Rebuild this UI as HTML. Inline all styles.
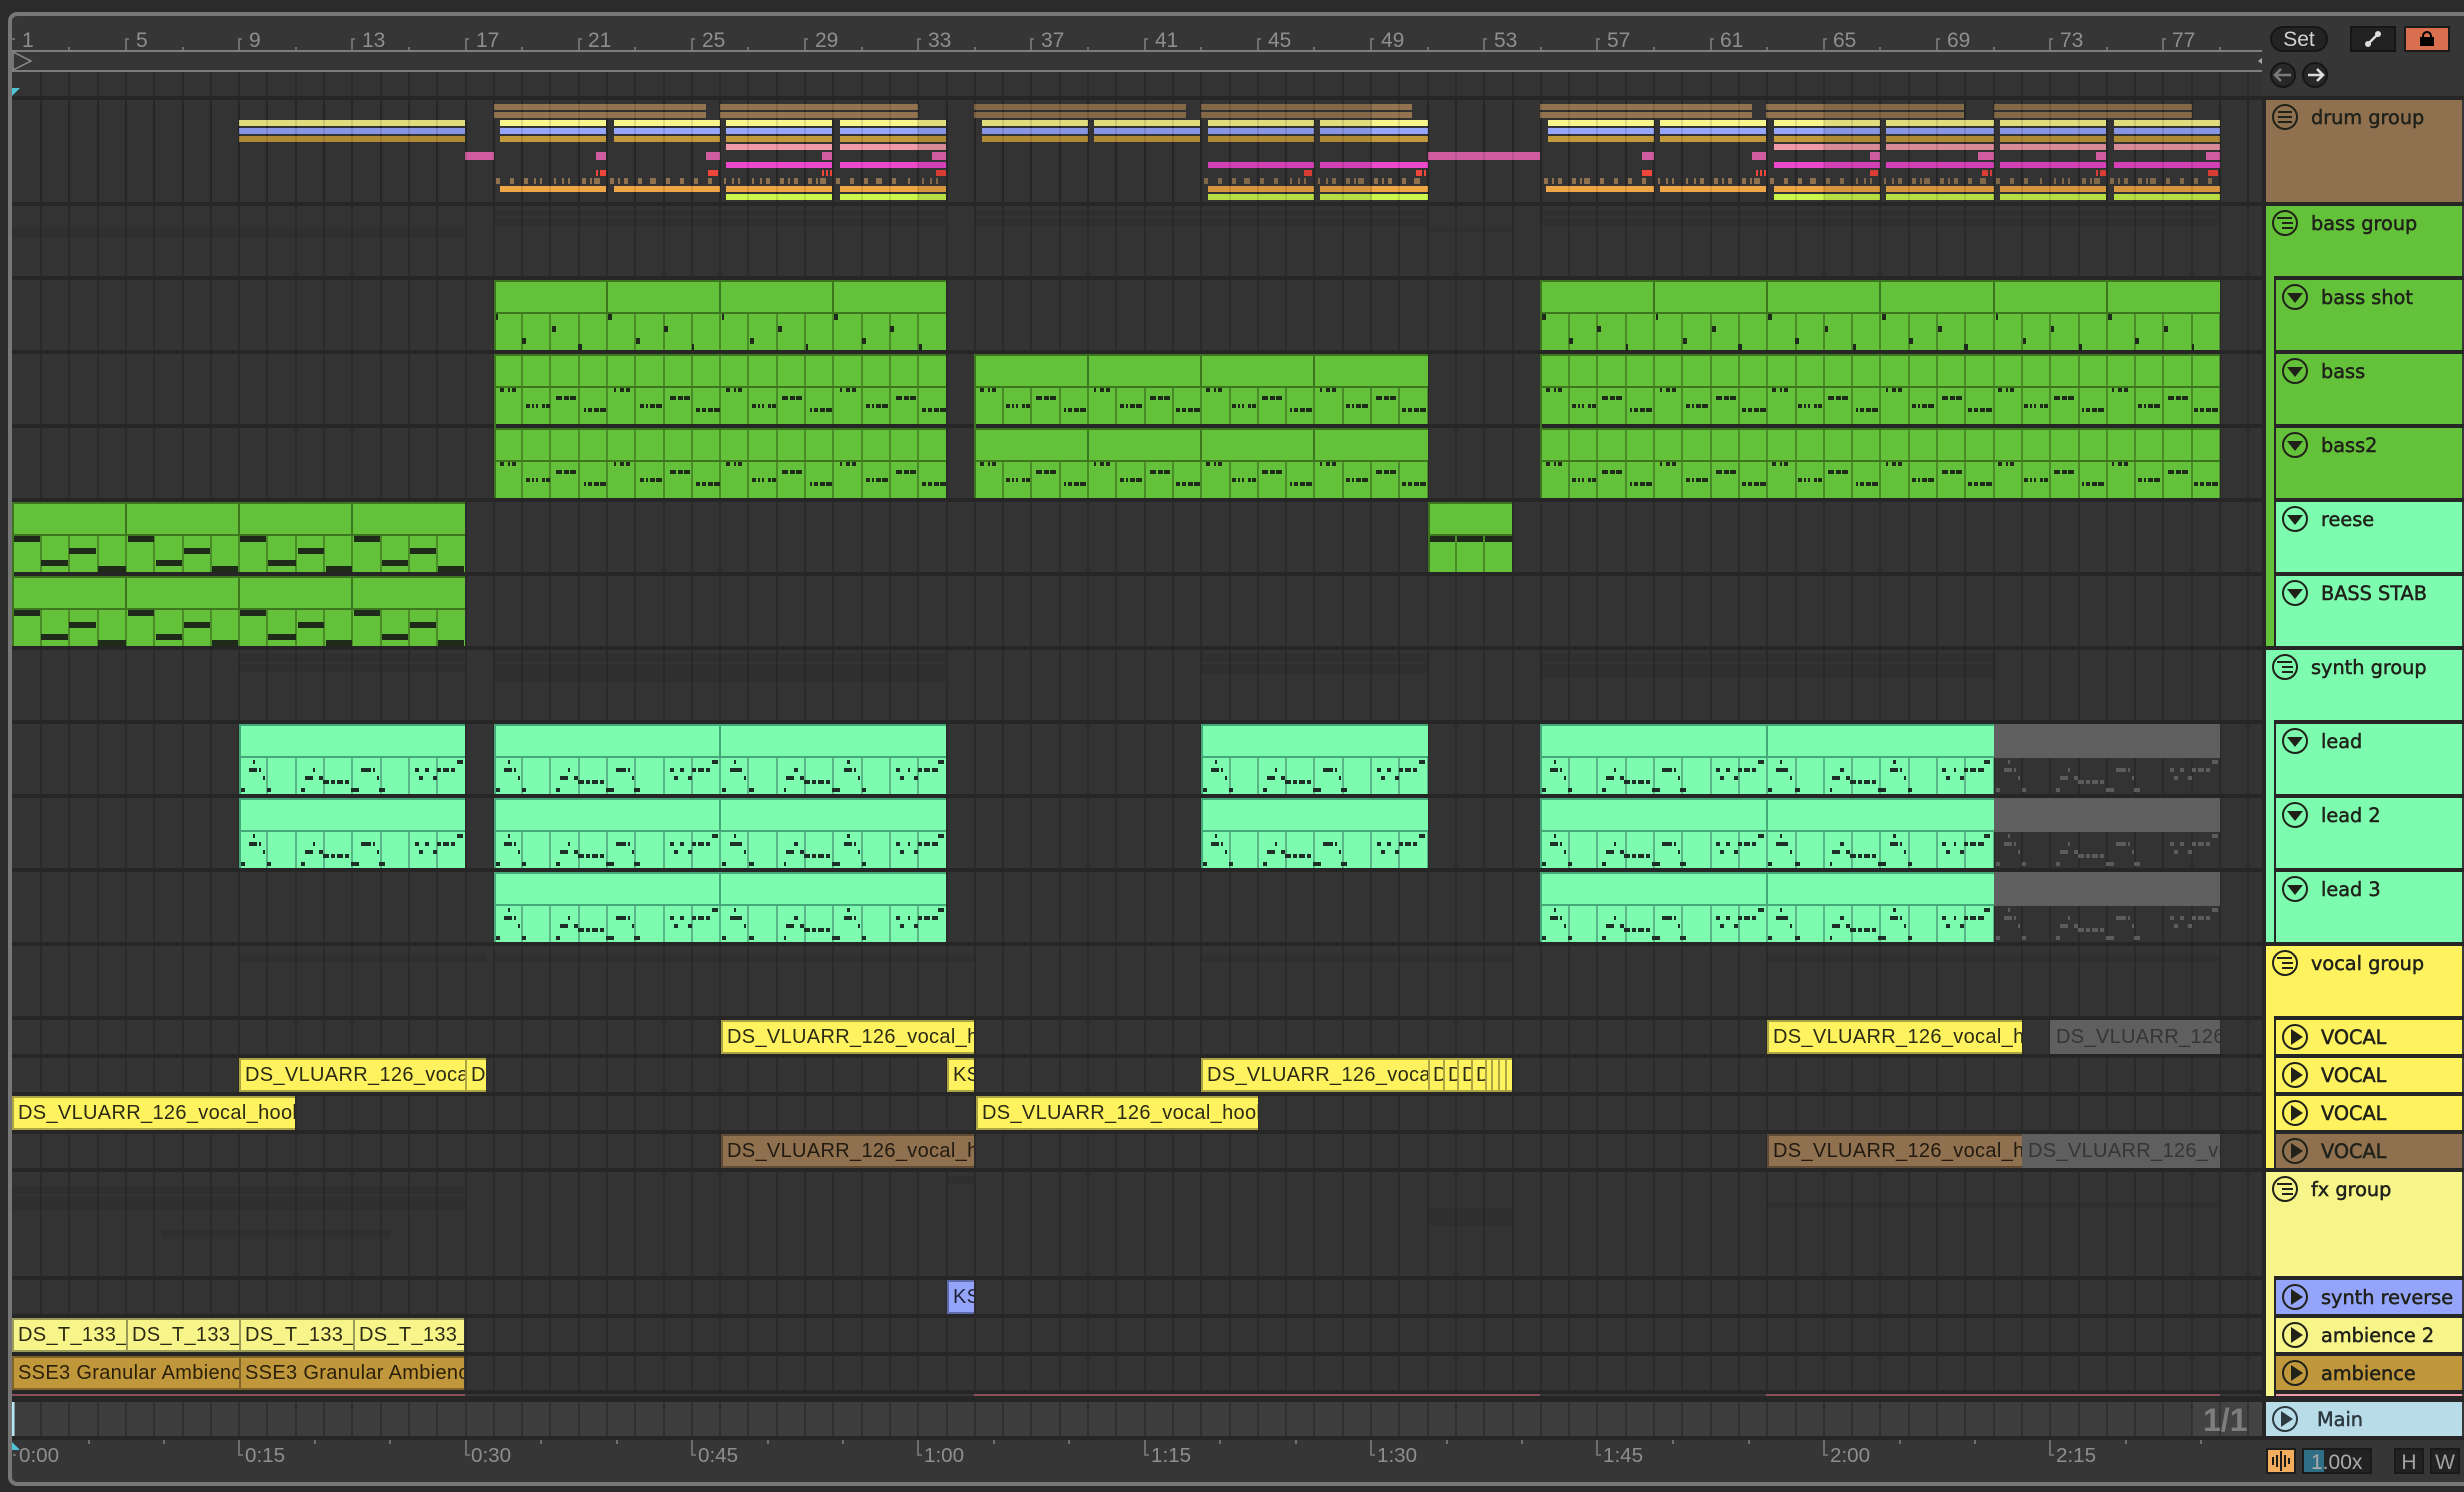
<!DOCTYPE html>
<html><head><meta charset="utf-8"><title>Arrangement</title>
<style>
html,body{margin:0;padding:0;background:#2b2b2b;width:2464px;height:1492px;overflow:hidden}
#f{position:absolute;left:8px;top:12px;width:2480px;height:1474px;box-sizing:border-box;border:4px solid #777;border-radius:9px;background:#363636}
svg{position:absolute;left:0;top:0}
svg text{font-family:"Liberation Sans",sans-serif}
.rl{font-size:21px;fill:#8e8e8e}
.h text{font-family:"DejaVu Sans",sans-serif;font-size:19.3px;stroke:currentColor;stroke-width:.5px;fill:currentColor}
.h{color:#20221a}
.c{position:absolute;box-sizing:border-box;height:34px;border:2px solid;border-right:0;font:20px/31px "Liberation Sans",sans-serif;letter-spacing:.33px;padding-left:4px;overflow:hidden;white-space:pre;color:#2b2a14}
.y{background:#fef35f;border-color:#aca343}
.b{background:#8f7150;border-color:#5f4b36;color:#221a10}
.g{background:#5f5f5f;border-color:#5f5f5f;color:#353535}
.l{background:#f7f48a;border-color:#9c9a58}
.o{background:#c0973a;border-color:#7f6427;color:#2a200a}
.p{background:#94a4fa;border-color:#5f6aa8;color:#20243a}
</style></head><body>
<div id="f"></div>
<svg width="2464" height="1492" viewBox="0 0 2464 1492" fill="none">
<defs>
<path id="v" d="M41 0v1500M69 0v1500M98 0v1500M126 0v1500M154 0v1500M183 0v1500M211 0v1500M239 0v1500M267 0v1500M296 0v1500M324 0v1500M352 0v1500M381 0v1500M409 0v1500M437 0v1500M466 0v1500M494 0v1500M522 0v1500M550 0v1500M579 0v1500M607 0v1500M635 0v1500M664 0v1500M692 0v1500M720 0v1500M748 0v1500M777 0v1500M805 0v1500M833 0v1500M862 0v1500M890 0v1500M918 0v1500M947 0v1500M975 0v1500M1003 0v1500M1031 0v1500M1060 0v1500M1088 0v1500M1116 0v1500M1145 0v1500M1173 0v1500M1201 0v1500M1230 0v1500M1258 0v1500M1286 0v1500M1314 0v1500M1343 0v1500M1371 0v1500M1399 0v1500M1428 0v1500M1456 0v1500M1484 0v1500M1513 0v1500M1541 0v1500M1569 0v1500M1597 0v1500M1626 0v1500M1654 0v1500M1682 0v1500M1711 0v1500M1739 0v1500M1767 0v1500M1796 0v1500M1824 0v1500M1852 0v1500M1880 0v1500M1909 0v1500M1937 0v1500M1965 0v1500M1994 0v1500M2022 0v1500M2050 0v1500M2079 0v1500M2107 0v1500M2135 0v1500M2163 0v1500M2192 0v1500M2220 0v1500M2248 0v1500"/>
<clipPath id="gr"><rect x="12" y="72" width="2250" height="1322"/></clipPath>
<clipPath id="mn"><rect x="12" y="1402" width="2250" height="34"/></clipPath>
<clipPath id="dl"><rect x="12" y="102" width="2250" height="100"/></clipPath>
<clipPath id="dim"><rect x="239" y="118" width="226" height="84"/><rect x="918" y="100" width="454" height="102"/><rect x="1824" y="100" width="396" height="102"/></clipPath>
<clipPath id="gc">
<rect x="494" y="314" width="452" height="36"/><rect x="1540" y="314" width="680" height="36"/>
<rect x="494" y="356" width="452" height="68"/><rect x="974" y="388" width="454" height="36"/><rect x="1540" y="356" width="680" height="68"/>
<rect x="494" y="430" width="452" height="68"/><rect x="974" y="462" width="454" height="36"/><rect x="1540" y="430" width="680" height="68"/>
<rect x="12" y="536" width="453" height="36"/><rect x="1428" y="536" width="84" height="36"/><rect x="12" y="610" width="453" height="36"/>
</clipPath>
<clipPath id="mc">
<rect x="239" y="758" width="226" height="36"/><rect x="494" y="758" width="452" height="36"/><rect x="1201" y="758" width="227" height="36"/><rect x="1540" y="758" width="454" height="36"/>
<rect x="239" y="832" width="226" height="36"/><rect x="494" y="832" width="452" height="36"/><rect x="1201" y="832" width="227" height="36"/><rect x="1540" y="832" width="454" height="36"/>
<rect x="494" y="906" width="452" height="36"/><rect x="1540" y="906" width="454" height="36"/>
</clipPath>
<path id="a" d="M239 0H465M500 0H606M614 0H720M726 0H832M840 0H946M982 0H1088M1094 0H1200M1208 0H1314M1320 0H1428M1548 0H1654M1660 0H1766M1774 0H1880M1886 0H1994M2000 0H2106M2114 0H2220"/>
<path id="c" d="M726 0H832M840 0H946M1774 0H1880M1886 0H1994M2000 0H2106M2114 0H2220"/>
<path id="d" d="M1208 0H1314M1320 0H1428"/>
<path id="bn" d="M500 390h4M508 390h2M512 390h4M526 406h4M532 406h2M536 406h2M542 406h3M546 406h4M556 398h6M564 398h5M570 398h6M584 410h2M588 410h4M594 410h5M600 410h6M614 390h2M620 390h4M626 390h4M640 406h4M646 406h2M650 406h5M656 406h6M670 398h6M678 398h5M684 398h6M696 410h4M702 410h4M708 410h5M714 410h6"/>
<g id="bnn"><use href="#bn"/><use href="#bn" x="226"/><use href="#bn" x="480"/><use href="#bn" x="706"/><use href="#bn" x="1046"/><use href="#bn" x="1272"/><use href="#bn" x="1498"/></g>
<path id="sn" d="M14 539H40M41 563H68M69 551H96M98 569H126M128 539H154M156 563H182M184 551H210M212 569H238M240 539H266M268 563H296M298 551H324M326 569H352M354 539H380M382 563H408M410 551H436M438 569H464"/>
<path id="la" d="M508 762h2M712 762h6M504 770h8M514 770h2M568 770h2M616 770h10M628 770h2M670 770h4M680 770h4M692 770h4M698 770h6M706 770h4M518 778h2M560 778h8M574 778h4M632 778h2M674 778h4M688 778h4M578 782h6M586 782h4M592 782h6M600 782h4M496 790h4M522 790h4M556 790h4M606 790h8M634 790h6"/>
<path id="lb" d="M734 762h2M847 762h3M938 762h6M730 770h12M794 770h4M844 770h8M854 770h2M896 770h4M908 770h2M918 770h4M924 770h6M932 770h6M744 778h2M786 778h8M800 778h4M858 778h2M900 778h4M914 778h4M804 782h6M812 782h4M818 782h6M826 782h4M722 790h4M749 790h5M784 790h2M832 790h8M862 790h4"/>
<g id="ll"><use href="#la" x="-255"/><use href="#la"/><use href="#lb"/><use href="#la" x="707"/><use href="#la" x="1046"/><use href="#lb" x="1046"/></g>
<g id="ip"><circle r="12" stroke="currentColor" stroke-width="2" fill="none"/><path d="M-4-8V8L8 0Z" fill="currentColor"/></g>
<g id="id"><circle r="12" stroke="currentColor" stroke-width="2" fill="none"/><path d="M-8-4H8L0 6Z" fill="currentColor"/></g>
<g id="ig"><circle r="12" stroke="currentColor" stroke-width="2" fill="none"/><path d="M-8-5H7M-3 0H8M-3 5H8" stroke="currentColor" stroke-width="2"/></g>
<g id="ie"><circle r="12" stroke="currentColor" stroke-width="2" fill="none"/><path d="M-7-5H7M-7 0H7M-7 5H7" stroke="currentColor" stroke-width="2"/></g>
<g id="dr">
<g stroke-width="6">
<path stroke="#92734f" d="M494 107H706M720 107H918M974 107H1186M1201 107H1412M1540 107H1752M1766 107H1964M1994 107H2192M494 115H706M720 115H918M974 115H1186M1201 115H1412M1540 115H1752M1766 115H1964M1994 115H2192"/>
<use href="#a" y="123" stroke="#f8f58c"/><use href="#a" y="131" stroke="#96a6fb"/><use href="#a" y="139" stroke="#c2993b"/>
<use href="#c" y="147" stroke="#f09aa8"/>
<use href="#c" y="165" stroke="#ec48ca"/><use href="#d" y="165" stroke="#ec48ca"/>
<path stroke="#ef453a" d="M596 173h2M600 173h6M708 173h10M822 173h2M826 173h2M830 173h2M936 173h10M1304 173h8M1416 173h6M1424 173h2M1642 173h10M1756 173h2M1760 173h2M1764 173h2M1870 173h8M1982 173h6M1990 173h2M2096 173h2M2100 173h6M2208 173h10"/>
<path stroke="#f0a646" d="M500 189H606M614 189H720M726 189H832M840 189H946M1208 189H1314M1320 189H1428M1546 189H1654M1660 189H1766M1774 189H1880M1886 189H1994M2000 189H2106M2114 189H2220"/>
<use href="#c" y="197" stroke="#cbf64b"/><use href="#d" y="197" stroke="#cbf64b"/>
<path stroke="#8f7150" d="M496 181h4M510 181h4M524 181h4M534 181h2M540 181h2M554 181h2M562 181h2M568 181h2M582 181h4M590 181h2M594 181h6M610 181h4M618 181h2M624 181h4M638 181h4M650 181h6M666 181h4M680 181h4M694 181h4M708 181h4M724 181h2M732 181h2M738 181h2M752 181h2M760 181h2M766 181h4M780 181h4M788 181h2M794 181h4M808 181h4M816 181h2M820 181h6M836 181h4M850 181h4M864 181h4M876 181h6M892 181h4M908 181h2M922 181h2M930 181h2M936 181h2M1204 181h4M1218 181h4M1232 181h4M1244 181h6M1260 181h4M1274 181h4M1290 181h2M1298 181h2M1304 181h2M1318 181h2M1326 181h2M1332 181h4M1346 181h4M1354 181h2M1358 181h6M1374 181h4M1382 181h2M1388 181h4M1402 181h4M1414 181h6M1544 181h4M1552 181h2M1558 181h4M1572 181h4M1580 181h2M1584 181h6M1600 181h4M1614 181h4M1628 181h4M1642 181h4M1658 181h2M1666 181h2M1672 181h2M1686 181h2M1694 181h2M1700 181h4M1714 181h4M1722 181h2M1728 181h4M1742 181h4M1750 181h2M1754 181h6M1770 181h4M1784 181h4M1798 181h4M1810 181h6M1826 181h4M1840 181h4M1856 181h2M1864 181h2M1870 181h2M1884 181h2M1892 181h2M1898 181h4M1912 181h4M1920 181h2M1924 181h6M1940 181h4M1948 181h2M1954 181h4M1968 181h4M1980 181h6M1996 181h4M2010 181h4M2024 181h4M2040 181h2M2054 181h2M2062 181h2M2068 181h2M2082 181h4M2090 181h2M2094 181h6M2110 181h4M2118 181h2M2124 181h4M2138 181h4M2146 181h2M2150 181h6M2166 181h4M2180 181h4M2194 181h4M2208 181h4"/>
</g>
</g>
</defs>

<!-- grid -->
<rect x="12" y="72" width="2250" height="1322" fill="#333"/>
<use href="#v" stroke="#2a2a2a" stroke-width="2" clip-path="url(#gr)"/>
<rect x="12" y="1396" width="2250" height="6" fill="#262626"/>
<rect x="12" y="1402" width="2250" height="34" fill="#3d3d3d"/>
<use href="#v" stroke="#2f2f2f" stroke-width="2" clip-path="url(#mn)"/>
<rect x="2192" y="1402" width="70" height="34" fill="#fff" fill-opacity=".03"/>
<rect x="12" y="1402" width="2.5" height="34" fill="#b8e8f5"/>
<!-- ghost lanes -->
<g fill="#000" fill-opacity=".07">
<rect x="12" y="228" width="453" height="10"/>
<rect x="494" y="210" width="452" height="6"/><rect x="494" y="218" width="452" height="8"/>
<rect x="974" y="210" width="454" height="6"/><rect x="974" y="218" width="454" height="8"/>
<rect x="1540" y="210" width="680" height="6"/><rect x="1540" y="218" width="680" height="8"/>
<rect x="1428" y="228" width="84" height="4"/>
<rect x="239" y="654" width="226" height="8"/><rect x="239" y="664" width="226" height="8"/>
<rect x="494" y="654" width="452" height="8"/><rect x="494" y="664" width="452" height="8"/><rect x="494" y="672" width="452" height="10"/>
<rect x="1201" y="654" width="227" height="8"/><rect x="1201" y="664" width="227" height="10"/>
<rect x="1540" y="654" width="456" height="8"/><rect x="1540" y="664" width="456" height="14"/>
<rect x="239" y="955" width="247" height="7"/><rect x="494" y="955" width="480" height="7"/><rect x="1201" y="955" width="311" height="7"/><rect x="1766" y="955" width="454" height="7"/>
<rect x="12" y="1186" width="453" height="8"/><rect x="12" y="1196" width="453" height="14"/>
<rect x="162" y="1230" width="228" height="7"/><rect x="947" y="1176" width="27" height="8"/>
<rect x="1428" y="1208" width="84" height="18"/><rect x="1766" y="1202" width="454" height="6"/>
</g>
<!-- separators -->
<path stroke="#262626" stroke-width="4" d="M12 98H2464M12 204H2464M12 278H2464M12 352H2464M12 426H2464M12 500H2464M12 574H2464M12 648H2464M12 722H2464M12 796H2464M12 870H2464M12 944H2464M12 1018H2464M12 1056H2464M12 1094H2464M12 1132H2464M12 1170H2464M12 1278H2464M12 1316H2464M12 1354H2464M12 1392H2464M12 1438H2464"/>
<rect x="2262" y="96" width="4" height="1344" fill="#262626"/>
<rect x="2266" y="1396" width="198" height="6" fill="#262626"/>
<path stroke="#8a5058" stroke-width="2" d="M12 1395H465M974 1395H1540M1766 1395H2220"/>

<!-- drum lanes -->
<use href="#dr"/>
<path fill="#cf5c9e" d="M465 152h29v8h-29zM596 152h10v8h-10zM706 152h14v8h-14zM822 152h10v8h-10zM932 152h14v8h-14zM1428 152h112v8h-112zM1642 152h12v8h-12zM1752 152h14v8h-14zM1870 152h10v8h-10zM1978 152h16v8h-16zM2096 152h10v8h-10zM2206 152h14v8h-14z"/>
<use href="#dr" style="filter:brightness(.9)" clip-path="url(#dim)"/>
<use href="#v" stroke="#000" stroke-opacity=".1" stroke-width="2" clip-path="url(#dl)"/>

<!-- green clips -->
<g fill="#64c13a">
<rect x="494" y="280" width="452" height="70"/><rect x="1540" y="280" width="680" height="70"/>
<rect x="494" y="354" width="452" height="70"/><rect x="974" y="354" width="454" height="70"/><rect x="1540" y="354" width="680" height="70"/>
<rect x="494" y="428" width="452" height="70"/><rect x="974" y="428" width="454" height="70"/><rect x="1540" y="428" width="680" height="70"/>
<rect x="12" y="502" width="453" height="70"/><rect x="1428" y="502" width="84" height="70"/>
<rect x="12" y="576" width="453" height="70"/>
</g>
<use href="#v" stroke="#4a8a28" stroke-width="2" clip-path="url(#gc)"/>
<path stroke="#3e751f" stroke-width="2" d="M494 281H946M1540 281H2220M494 313H946M1540 313H2220M494 355H946M974 355H1428M1540 355H2220M494 387H946M974 387H1428M1540 387H2220M494 429H946M974 429H1428M1540 429H2220M494 461H946M974 461H1428M1540 461H2220M12 503H465M1428 503H1512M12 535H465M1428 535H1512M12 577H465M12 609H465M495 280V350M1541 280V350M495 354V498M975 354V498M1541 354V498M13 502V646M1429 502V572M607 282V312M720 282V312M833 282V312M1654 282V312M1767 282V312M1880 282V312M1994 282V312M2107 282V312M1088 356V386M1201 356V386M1314 356V386M1088 430V460M1201 430V460M1314 430V460M126 504V534M239 504V534M352 504V534M126 578V608M239 578V608M352 578V608"/>
<!-- green notes -->
<path stroke="#1e2a1a" stroke-width="6" d="M496 317h2M552 329h4M522 341h4M578 347h4M608 317h4M664 329h4M636 341h4M692 347h2M722 317h2M778 329h4M750 341h4M806 347h2M834 317h4M890 329h4M862 341h4M919 347h3M1542 317h4M1597 329h4M1569 341h4M1626 347h2M1656 317h2M1712 329h4M1683 341h4M1738 347h4M1768 317h4M1825 329h3M1795 341h4M1853 347h3M1882 317h4M1938 329h4M1909 341h4M1964 347h4M1996 317h2M2051 329h3M2023 341h3M2079 347h3M2108 317h4M2164 329h4M2135 341h4M2192 347h2"/>
<g stroke="#1e2a1a" stroke-width="4"><use href="#bnn"/><use href="#bnn" y="74"/></g>
<g stroke="#1e2a1a" stroke-width="6"><use href="#sn"/><use href="#sn" y="74"/><path d="M1430 539H1455M1457 539H1483M1485 539H1512"/></g>

<!-- mint clips -->
<g fill="#7dfcb0">
<path id="mr" d="M239 724h226v70H239zM494 724h452v70H494zM1201 724h227v70h-227zM1540 724h454v70h-454zM239 798h226v70H239zM494 798h452v70H494zM1201 798h227v70h-227zM1540 798h454v70h-454zM494 872h452v70H494zM1540 872h454v70h-454z"/>
</g>
<use href="#v" stroke="#5ab687" stroke-width="2" clip-path="url(#mc)"/>
<path stroke="#45a878" stroke-width="2" d="M239 725H465M494 725H946M1201 725H1428M1540 725H1994M239 757H465M494 757H946M1201 757H1428M1540 757H1994M239 799H465M494 799H946M1201 799H1428M1540 799H1994M239 831H465M494 831H946M1201 831H1428M1540 831H1994M494 873H946M1540 873H1994M494 905H946M1540 905H1994M720 726V756M1767 726V756M720 800V830M1767 800V830M720 874V904M1767 874V904M240 724V794M495 724V794M1202 724V794M1541 724V794M240 798V868M495 798V868M1202 798V868M1541 798V868M495 872V942M1541 872V942"/>
<g stroke="#1d2f27" stroke-width="4"><use href="#ll"/><use href="#ll" y="74"/><use href="#la" y="148"/><use href="#lb" y="148"/><use href="#la" x="1046" y="148"/><use href="#lb" x="1046" y="148"/></g>
<!-- gray clips -->
<g fill="#5f5f5f"><rect x="1994" y="724" width="226" height="34"/><rect x="1994" y="798" width="226" height="34"/><rect x="1994" y="872" width="226" height="34"/></g>
<g stroke="#5c5c5c" stroke-width="4"><use href="#la" x="1500"/><use href="#la" x="1500" y="74"/><use href="#la" x="1500" y="148"/></g>

<!-- ruler -->
<path stroke="#7d7d7d" stroke-width="2" d="M12 51H2262M12 71H2262"/>
<path stroke="#7d7d7d" stroke-width="1.6" d="M126 50V39h3M239 50V39h3M352 50V39h3M466 50V39h3M579 50V39h3M692 50V39h3M805 50V39h3M918 50V39h3M1031 50V39h3M1145 50V39h3M1258 50V39h3M1371 50V39h3M1484 50V39h3M1597 50V39h3M1711 50V39h3M1824 50V39h3M1937 50V39h3M2050 50V39h3M2163 50V39h3M12 39h3M69 50v-3M183 50v-3M296 50v-3M409 50v-3M522 50v-3M635 50v-3M748 50v-3M862 50v-3M975 50v-3M1088 50v-3M1201 50v-3M1314 50v-3M1428 50v-3M1541 50v-3M1654 50v-3M1767 50v-3M1880 50v-3M1994 50v-3M2107 50v-3M2220 50v-3"/>
<path d="M13 52V70L31 61Z" stroke="#8c8c8c" stroke-width="1.5"/>
<path d="M2258 61l4-3v6z" fill="#aaa"/>
<g class="rl">
<text x="22" y="47">1</text><text x="136" y="47">5</text><text x="249" y="47">9</text><text x="362" y="47">13</text><text x="476" y="47">17</text><text x="588" y="47">21</text><text x="702" y="47">25</text><text x="815" y="47">29</text><text x="928" y="47">33</text><text x="1041" y="47">37</text><text x="1155" y="47">41</text><text x="1268" y="47">45</text><text x="1381" y="47">49</text><text x="1494" y="47">53</text><text x="1607" y="47">57</text><text x="1720" y="47">61</text><text x="1833" y="47">65</text><text x="1947" y="47">69</text><text x="2060" y="47">73</text><text x="2172" y="47">77</text>
</g>
<path d="M12 88h8l-8 8z" fill="#4fc4d8"/>

<!-- top-right controls -->
<rect x="2271" y="27" width="56" height="24" rx="12" fill="#232323" stroke="#161616" stroke-width="2"/>
<text x="2299" y="46" text-anchor="middle" font-size="21" fill="#d2d2d2">Set</text>
<circle cx="2283" cy="75" r="12" fill="#272727" stroke="#161616" stroke-width="2"/>
<circle cx="2315" cy="75" r="12" fill="#272727" stroke="#161616" stroke-width="2"/>
<path d="M2275 75h16M2281 69l-6 6 6 6" stroke="#7a7a7a" stroke-width="2.6"/>
<path d="M2308 75h15M2317 69l6 6-6 6" stroke="#dcdcdc" stroke-width="2.6"/>
<rect x="2351" y="27" width="44" height="24" fill="#222" stroke="#161616" stroke-width="2"/>
<path d="M2369 43l8-8" stroke="#ddd" stroke-width="2.4"/><circle cx="2368" cy="44" r="3" fill="#ddd"/><circle cx="2378" cy="34" r="3" fill="#ddd"/>
<rect x="2405" y="27" width="44" height="24" fill="#d96f4f" stroke="#1b1b1b" stroke-width="2"/>
<path d="M2420 37h14v9h-14z" fill="#000"/><path d="M2423 37v-1a4 4 0 0 1 8 0v1" stroke="#000" stroke-width="2"/>

<!-- track headers -->
<rect x="2266" y="100" width="196" height="102" fill="#8f7150"/>
<rect x="2266" y="206" width="196" height="440" fill="#64c13a"/>
<rect x="2274" y="276" width="188" height="370" fill="#262626"/>
<rect x="2276" y="280" width="186" height="70" fill="#64c13a"/><rect x="2276" y="354" width="186" height="70" fill="#64c13a"/><rect x="2276" y="428" width="186" height="70" fill="#64c13a"/>
<rect x="2276" y="502" width="186" height="70" fill="#7dfcb0"/><rect x="2276" y="576" width="186" height="70" fill="#7dfcb0"/>
<rect x="2266" y="650" width="196" height="292" fill="#7dfcb0"/>
<rect x="2274" y="720" width="188" height="222" fill="#262626"/>
<rect x="2276" y="724" width="186" height="70" fill="#7dfcb0"/><rect x="2276" y="798" width="186" height="70" fill="#7dfcb0"/><rect x="2276" y="872" width="186" height="70" fill="#7dfcb0"/>
<rect x="2266" y="946" width="196" height="222" fill="#fef35f"/>
<rect x="2274" y="1016" width="188" height="152" fill="#262626"/>
<rect x="2276" y="1020" width="186" height="34" fill="#fef35f"/><rect x="2276" y="1058" width="186" height="34" fill="#fef35f"/><rect x="2276" y="1096" width="186" height="34" fill="#fef35f"/><rect x="2276" y="1134" width="186" height="34" fill="#8f7150"/>
<rect x="2266" y="1172" width="196" height="224" fill="#f7f48a"/>
<rect x="2274" y="1276" width="188" height="120" fill="#262626"/>
<rect x="2276" y="1280" width="186" height="34" fill="#94a4fa"/><rect x="2276" y="1318" width="186" height="34" fill="#f7f48a"/><rect x="2276" y="1356" width="186" height="34" fill="#c0973a"/><rect x="2276" y="1394" width="186" height="2" fill="#f09aa8"/>
<rect x="2266" y="1402" width="196" height="34" fill="#b8dde9"/>

<g class="h">
<use href="#ie" x="2285" y="117"/><text x="2311" y="124">drum group</text>
<use href="#ig" x="2285" y="223"/><text x="2311" y="230">bass group</text>
<use href="#id" x="2295" y="297"/><text x="2321" y="304">bass shot</text>
<use href="#id" x="2295" y="371"/><text x="2321" y="378">bass</text>
<use href="#id" x="2295" y="445"/><text x="2321" y="452">bass2</text>
<use href="#id" x="2295" y="519"/><text x="2321" y="526">reese</text>
<use href="#id" x="2295" y="593"/><text x="2321" y="600">BASS STAB</text>
<use href="#ig" x="2285" y="667"/><text x="2311" y="674">synth group</text>
<use href="#id" x="2295" y="741"/><text x="2321" y="748">lead</text>
<use href="#id" x="2295" y="815"/><text x="2321" y="822">lead 2</text>
<use href="#id" x="2295" y="889"/><text x="2321" y="896">lead 3</text>
<use href="#ig" x="2285" y="963"/><text x="2311" y="970">vocal group</text>
<use href="#ip" x="2295" y="1037"/><text x="2321" y="1044">VOCAL</text>
<use href="#ip" x="2295" y="1075"/><text x="2321" y="1082">VOCAL</text>
<use href="#ip" x="2295" y="1113"/><text x="2321" y="1120">VOCAL</text>
<use href="#ip" x="2295" y="1151"/><text x="2321" y="1158">VOCAL</text>
<use href="#ig" x="2285" y="1189"/><text x="2311" y="1196">fx group</text>
<use href="#ip" x="2295" y="1297"/><text x="2321" y="1304">synth reverse</text>
<use href="#ip" x="2295" y="1335"/><text x="2321" y="1342">ambience 2</text>
<use href="#ip" x="2295" y="1373"/><text x="2321" y="1380">ambience</text>
<use href="#ip" x="2285" y="1419" style="color:#2e3a40"/><text x="2317" y="1426" style="color:#2e3a40">Main</text>
</g>
<text x="2203" y="1431" font-size="32" font-weight="700" fill="#7e7e7e">1/1</text>

<!-- bottom ruler -->
<path stroke="#7d7d7d" stroke-width="1.6" d="M239 1440V1455h4M466 1440V1455h4M692 1440V1455h4M918 1440V1455h4M1145 1440V1455h4M1371 1440V1455h4M1597 1440V1455h4M1824 1440V1455h4M2050 1440V1455h4M13 1455h3M89 1440v4M164 1440v4M315 1440v4M390 1440v4M541 1440v4M617 1440v4M768 1440v4M843 1440v4M994 1440v4M1069 1440v4M1220 1440v4M1296 1440v4M1447 1440v4M1522 1440v4M1673 1440v4M1749 1440v4M1900 1440v4M1975 1440v4M2126 1440v4M2201 1440v4"/>
<path d="M12 1442v8h8z" fill="#4fc4d8"/>
<g class="rl" style="font-size:20.6px">
<text x="19" y="1462">0:00</text><text x="245" y="1462">0:15</text><text x="471" y="1462">0:30</text><text x="698" y="1462">0:45</text><text x="924" y="1462">1:00</text><text x="1151" y="1462">1:15</text><text x="1377" y="1462">1:30</text><text x="1603" y="1462">1:45</text><text x="1830" y="1462">2:00</text><text x="2056" y="1462">2:15</text>
</g>
<!-- bottom-right -->
<rect x="2267" y="1449" width="28" height="24" fill="#f2ae5c" stroke="#1e1e1e" stroke-width="2"/>
<path stroke="#1b1b1b" stroke-width="2" d="M2273 1457v8M2277 1455v12M2281 1451v20M2285 1455v12M2289 1458v6"/>
<rect x="2303" y="1449" width="68" height="24" fill="#222" stroke="#1a1a1a" stroke-width="2"/>
<rect x="2304" y="1450" width="20" height="22" fill="#2f6f85"/>
<text x="2311" y="1469" font-size="21" fill="#ababab">1.00x</text>
<rect x="2395" y="1449" width="28" height="24" fill="#222" stroke="#1a1a1a" stroke-width="2"/>
<rect x="2431" y="1449" width="28" height="24" fill="#222" stroke="#1a1a1a" stroke-width="2"/>
<text x="2409" y="1469" text-anchor="middle" font-size="21" fill="#a2a2a2">H</text>
<text x="2445" y="1469" text-anchor="middle" font-size="21" fill="#a2a2a2">W</text>
</svg>

<!-- text clips -->
<div class="c y" style="left:721px;top:1020px;width:253px">DS_VLUARR_126_vocal_hook</div>
<div class="c y" style="left:1767px;top:1020px;width:255px">DS_VLUARR_126_vocal_hook</div>
<div class="c g" style="left:2050px;top:1020px;width:170px">DS_VLUARR_126_vocal_hook</div>
<div class="c y" style="left:239px;top:1058px;width:226px">DS_VLUARR_126_vocal_hook</div>
<div class="c y" style="left:465px;top:1058px;width:21px">DS_VLUARR</div>
<div class="c y" style="left:947px;top:1058px;width:27px">KS_</div>
<div class="c y" style="left:1201px;top:1058px;width:227px">DS_VLUARR_126_vocal_hook</div>
<div class="c y" style="left:1428px;top:1058px;width:15px;padding-left:3px">DS</div>
<div class="c y" style="left:1443px;top:1058px;width:14px;padding-left:3px">DS</div>
<div class="c y" style="left:1457px;top:1058px;width:14px;padding-left:3px">DS</div>
<div class="c y" style="left:1471px;top:1058px;width:14px;padding-left:3px">DS</div>
<div class="c y" style="left:1485px;top:1058px;width:6px;padding:0"></div>
<div class="c y" style="left:1491px;top:1058px;width:7px;padding:0"></div>
<div class="c y" style="left:1498px;top:1058px;width:7px;padding:0"></div>
<div class="c y" style="left:1505px;top:1058px;width:7px;padding:0"></div>
<div class="c y" style="left:12px;top:1096px;width:283px">DS_VLUARR_126_vocal_hook</div>
<div class="c y" style="left:976px;top:1096px;width:282px">DS_VLUARR_126_vocal_hook</div>
<div class="c b" style="left:721px;top:1134px;width:253px">DS_VLUARR_126_vocal_hook</div>
<div class="c b" style="left:1767px;top:1134px;width:255px">DS_VLUARR_126_vocal_hook</div>
<div class="c g" style="left:2022px;top:1134px;width:198px">DS_VLUARR_126_vocal_hook</div>
<div class="c p" style="left:947px;top:1280px;width:27px">KS_</div>
<div class="c l" style="left:12px;top:1318px;width:114px">DS_T_133_</div>
<div class="c l" style="left:126px;top:1318px;width:113px">DS_T_133_</div>
<div class="c l" style="left:239px;top:1318px;width:114px">DS_T_133_</div>
<div class="c l" style="left:353px;top:1318px;width:111px">DS_T_133_</div>
<div class="c o" style="left:12px;top:1356px;width:227px">SSE3 Granular Ambience</div>
<div class="c o" style="left:239px;top:1356px;width:225px">SSE3 Granular Ambience</div>
</body></html>
